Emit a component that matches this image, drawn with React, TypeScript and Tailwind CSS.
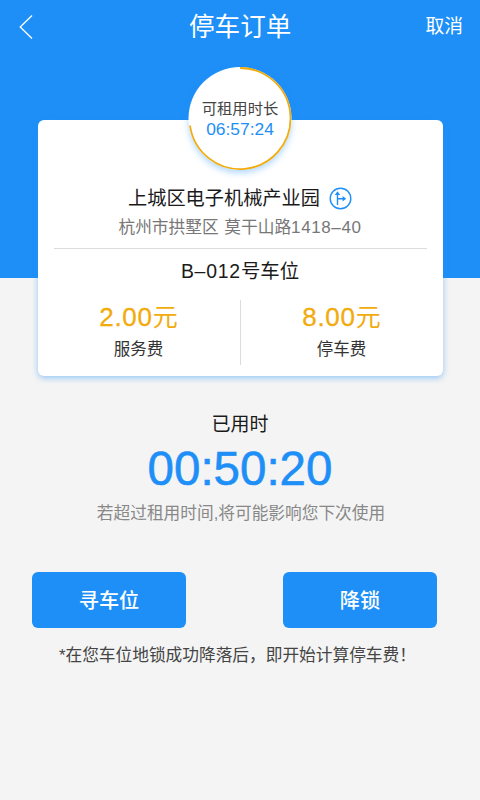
const Header = () => {
  return (
    <header className="flex h-[54px] items-center justify-between pl-[19px] pr-[17px] text-white">
      <svg className="h-[26px] w-[36px]" viewBox="0 0 36 26" fill="none" stroke="currentColor" strokeWidth="1.3">
        <path d="M13 1.5 1.2 13 13 24.5" />
      </svg>
      <h1 className="text-[25.6px] leading-[54px]">停车订单</h1>
      <button className="text-[18.8px] leading-[54px]">取消</button>
    </header>
  )
}

const RentRing = () => {
  return (
    <div className="absolute left-1/2 top-[-53px] h-[103px] w-[103px] -translate-x-1/2 rounded-full bg-white shadow-[0_3px_6px_rgba(30,143,247,0.35)]">
      <svg className="absolute inset-0" width="103" height="103" viewBox="0 0 103 103" fill="none">
        <path d="M51.5 1A50.5 50.5 0 1 1 1.5 58.5" stroke="#f2ab0d" strokeWidth="1.8" />
      </svg>
      <div className="relative flex flex-col items-center pt-[31px]">
        <span className="text-[15.3px] leading-[21px] text-[#444]">可租用时长</span>
        <span className="text-[17.4px] leading-5 text-[#1e8ff7]">06:57:24</span>
      </div>
    </div>
  )
}

const Fee = ({ amount, label }: { amount: string; label: string }) => {
  return (
    <div className="flex w-[202px] flex-col items-center">
      <span className="text-[25px] leading-[34px] text-[#f2ab0d]">
        <span className="text-[26px] tracking-[0.7px] [-webkit-text-stroke:0.3px_#f2ab0d]">{amount}</span>元
      </span>
      <span className="mt-px text-[16.5px] leading-7 text-[#333]">{label}</span>
    </div>
  )
}

const OrderCard = () => {
  return (
    <section className="relative mx-auto mt-[66px] h-[256px] w-[405px] rounded-md bg-white px-4 pt-[65px] shadow-[0_2px_6px_rgba(30,143,247,0.45)]">
      <RentRing />
      <div className="flex h-7 items-center justify-center gap-2 text-[19.2px] text-[#1a1a1a]">
        <span>上城区电子机械产业园</span>
        <svg className="relative -top-px" width="24" height="24" viewBox="0 0 24 24" fill="none" stroke="#1e8ff7" strokeWidth="1.4">
          <circle cx="12.5" cy="12.5" r="10.3" />
          <path d="M9.5 19V7M9.5 12.8h6" />
          <path d="M9.5 5.2 6.8 9h5.4zM18.2 12.8l-3.6-2.7v5.4z" fill="#1e8ff7" stroke="none" />
        </svg>
      </div>
      <p className="h-[30px] text-center text-[16.7px] leading-[30px] text-[#777]">
        杭州市拱墅区<span className="text-[17px] tracking-[1px]"> </span>莫干山路
        <span className="text-[17px] tracking-[0.6px]">1418–40</span>
      </p>
      <div className="mt-[5px] border-t border-[#dcdcdc]" />
      <p className="h-[45px] text-center text-[19.4px] leading-[45px] text-[#1a1a1a]">
        <span className="tracking-[0.8px]">B–012</span>号车位
      </p>
      <div className="-mx-4 mt-[6px] flex h-[65px]">
        <Fee amount="2.00" label="服务费" />
        <div className="w-px bg-[#dcdcdc]" />
        <Fee amount="8.00" label="停车费" />
      </div>
    </section>
  )
}

const App = () => {
  return (
    <main className="h-[800px] w-[480px] overflow-hidden bg-[#f4f4f4] font-['Liberation_Sans','Noto_Sans_CJK_SC',sans-serif]">
      <div className="h-[278px] bg-[#1e8ff7]">
        <Header />
        <OrderCard />
      </div>

      <section className="flex flex-col items-center pt-[133px]">
        <span className="text-[19px] leading-7 text-[#1a1a1a]">已用时</span>
        <span className="mt-[3px] text-[47.5px] leading-[54px] text-[#1e8ff7] [-webkit-text-stroke:0.6px_#1e8ff7]">
          00:50:20
        </span>
        <span className="mt-1 ml-0.5 text-[16.7px] leading-7 text-[#888]">若超过租用时间,将可能影响您下次使用</span>
      </section>

      <div className="mt-11 flex justify-between pl-8 pr-[43px]">
        <button className="h-14 w-[154px] rounded-md bg-[#1e8ff7] pt-0.5 text-[20.2px] font-medium text-white">寻车位</button>
        <button className="h-14 w-[154px] rounded-md bg-[#1e8ff7] pt-0.5 text-[20.2px] font-medium text-white">降锁</button>
      </div>
      <p className="mt-3.5 pl-[59px] text-[16.7px] leading-7 text-[#444]">*在您车位地锁成功降落后，即开始计算停车费！</p>
    </main>
  )
}

export default App
